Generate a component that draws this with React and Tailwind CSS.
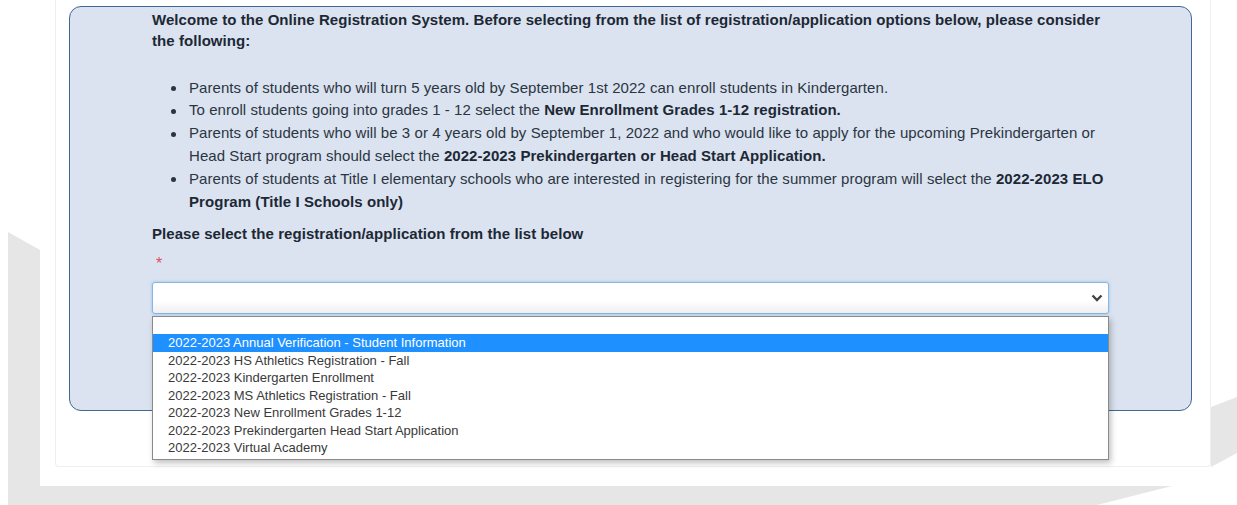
import React from "react";

const options = [
  "2022-2023 Annual Verification - Student Information",
  "2022-2023 HS Athletics Registration - Fall",
  "2022-2023 Kindergarten Enrollment",
  "2022-2023 MS Athletics Registration - Fall",
  "2022-2023 New Enrollment Grades 1-12",
  "2022-2023 Prekindergarten Head Start Application",
  "2022-2023 Virtual Academy",
];

function Bullet({ children }) {
  return (
    <li className="flex items-start">
      <span className="mt-[9.5px] ml-[19px] mr-[13px] h-[5px] w-[5px] shrink-0 rounded-full bg-[#2b3542]" />
      <span>{children}</span>
    </li>
  );
}

// grey frame pieces drawn behind the page
function Backdrop() {
  return (
    <svg className="absolute inset-0" width="1237" height="505" viewBox="0 0 1237 505">
      <polygon points="8,232 40,250 40,486 1172,486 1097,505 8,505" fill="#e6e6e6" />
      <polygon points="1211,407 1237,397 1237,453 1211,467" fill="#e6e6e6" />
    </svg>
  );
}

export default function App() {
  return (
    <div className="relative h-[505px] w-[1237px] overflow-hidden bg-white font-['Liberation_Sans',Arial,sans-serif]">
      <Backdrop />
      <div className="relative pl-[55px]">
        <div className="h-[467px] w-[1156px] rounded-b-[4px] border-x border-b border-[#efefef] bg-white pl-[13px] pt-[6px]">
          <div className="h-[405px] w-[1123px] rounded-[12px] border border-[#3f6897] bg-[#dae3ef] pl-[82px] pt-[2px]">
            <div className="w-[960px] tracking-[0.06px]">
              <p className="text-[15px] font-bold leading-[21px] text-[#1d2835]">
                Welcome to the Online Registration System. Before selecting from the list of registration/application options below, please consider the following:
              </p>
              <ul className="mt-[25.6px] text-[15px] leading-[22.8px] text-[#2b3542]">
                <Bullet>Parents of students who will turn 5 years old by September 1st 2022 can enroll students in Kindergarten.</Bullet>
                <Bullet>
                  To enroll students going into grades 1 - 12 select the <b className="text-[#1d2835]">New Enrollment Grades 1-12 registration.</b>
                </Bullet>
                <Bullet>
                  Parents of students who will be 3 or 4 years old by September 1, 2022 and who would like to apply for the upcoming Prekindergarten or Head Start program should select the{" "}
                  <b className="text-[#1d2835]">2022-2023 Prekindergarten or Head Start Application.</b>
                </Bullet>
                <Bullet>
                  Parents of students at Title I elementary schools who are interested in registering for the summer program will select the{" "}
                  <b className="text-[#1d2835]">2022-2023 ELO Program (Title I Schools only)</b>
                </Bullet>
              </ul>
              <p className="mt-[10px] text-[15px] font-bold leading-[21px] text-[#1d2835]">
                Please select the registration/application from the list below
              </p>
              <div className="mt-[9px] ml-[4px] text-[16px] leading-[21px] text-[#e2505c]">*</div>

              <div className="relative mt-[8px] w-[957px]">
                <div className="flex h-[32px] items-center justify-end rounded-[3px] border border-[#86b7e7] bg-gradient-to-b from-white from-60% to-[#efefef] pr-[5px] shadow-[0_0_3px_rgba(100,160,230,0.6)]">
                  <svg width="12" height="8" viewBox="0 0 12 8">
                    <path d="M1.5 1.5 L6 6 L10.5 1.5" fill="none" stroke="#444" strokeWidth="2.4" />
                  </svg>
                </div>

                <div className="absolute left-0 top-[34px] w-[957px] border border-[#8a8a8a] bg-white pb-[2px] text-[13px] tracking-normal text-[#3a3a3a] shadow-[2px_3px_6px_rgba(0,0,0,0.25)]">
                  <div className="h-[17px]" />
                  {options.map((o, i) => (
                    <div
                      key={o}
                      className={`pl-[15px] leading-[17.5px] ${i === 0 ? "bg-[#1e90ff] text-white" : ""}`}
                    >
                      {o}
                    </div>
                  ))}
                </div>
              </div>
            </div>
          </div>
        </div>
      </div>
    </div>
  );
}
